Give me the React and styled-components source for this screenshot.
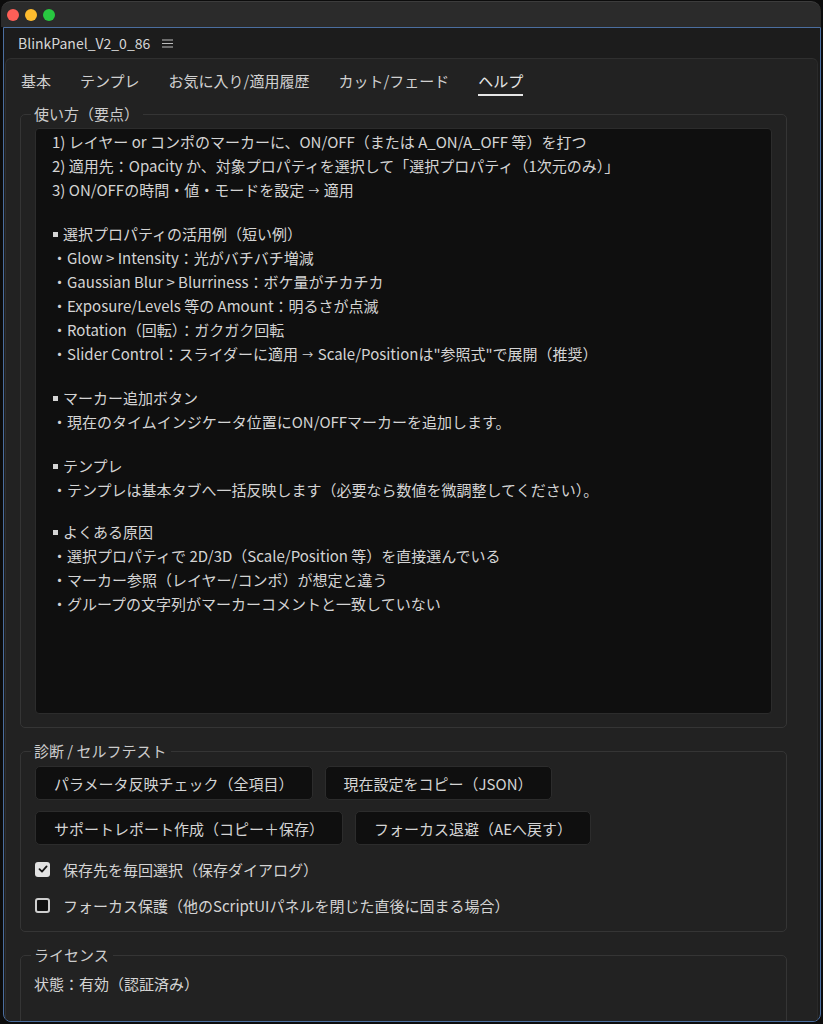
import React from "react";
import styled, { createGlobalStyle } from "styled-components";

const FONT = `"Noto Sans CJK JP", "Noto Sans", sans-serif`;

const GlobalStyle = createGlobalStyle`
  html, body {
    margin: 0;
    padding: 0;
    background: #0c0c0c;
  }
  * {
    box-sizing: border-box;
  }
`;

const helpLines = [
  { text: "1) レイヤー or コンポのマーカーに、ON/OFF（または A_ON/A_OFF 等）を打つ" },
  { text: "2) 適用先：Opacity か、対象プロパティを選択して「選択プロパティ（1次元のみ）」" },
  { text: "3) ON/OFFの時間・値・モードを設定 → 適用" },
  { blank: 20 },
  { head: "選択プロパティの活用例（短い例）" },
  { text: "・Glow > Intensity：光がバチバチ増減" },
  { text: "・Gaussian Blur > Blurriness：ボケ量がチカチカ" },
  { text: "・Exposure/Levels 等の Amount：明るさが点滅" },
  { text: "・Rotation（回転）：ガクガク回転" },
  { text: "・Slider Control：スライダーに適用 → Scale/Positionは\"参照式\"で展開（推奨）" },
  { blank: 20 },
  { head: "マーカー追加ボタン" },
  { text: "・現在のタイムインジケータ位置にON/OFFマーカーを追加します。" },
  { blank: 20 },
  { head: "テンプレ" },
  { text: "・テンプレは基本タブへ一括反映します（必要なら数値を微調整してください）。" },
  { blank: 18 },
  { head: "よくある原因" },
  { text: "・選択プロパティで 2D/3D（Scale/Position 等）を直接選んでいる" },
  { text: "・マーカー参照（レイヤー/コンポ）が想定と違う" },
  { text: "・グループの文字列がマーカーコメントと一致していない" },
];

const tabs = ["基本", "テンプレ", "お気に入り/適用履歴", "カット/フェード", "ヘルプ"];

// the arrow is drawn smaller than the text around it
function withArrows(text) {
  const parts = text.split("→");
  return parts.map((p, i) => (
    <React.Fragment key={i}>
      {p}
      {i < parts.length - 1 && <Arrow>→</Arrow>}
    </React.Fragment>
  ));
}

function CheckIcon() {
  return (
    <svg width="10" height="10" viewBox="0 0 10 10">
      <path d="M1.5 5.2 L4 7.6 L8.6 2.4" fill="none" stroke="#161616" strokeWidth="1.8" strokeLinecap="round" strokeLinejoin="round" />
    </svg>
  );
}

function MenuIcon() {
  return (
    <svg width="11" height="9" viewBox="0 0 11 9">
      <path d="M0 1h11M0 4.5h11M0 8h11" stroke="#bdbdbd" strokeWidth="1.1" />
    </svg>
  );
}

export default function App() {
  return (
    <>
      <GlobalStyle />
      <Window>
        <TitleBar>
          <Light color="#fe5f57" />
          <Light color="#febc2e" />
          <Light color="#28c840" />
        </TitleBar>
        <Frame>
          <Header>
            <span>BlinkPanel_V2_0_86</span>
            <MenuIcon />
          </Header>
          <Content>
            <Tabs>
              {tabs.map((t) => (
                <Tab key={t} active={t === "ヘルプ"}>
                  {t}
                </Tab>
              ))}
            </Tabs>

            <Group bottom={13}>
              <Legend>使い方（要点）</Legend>
              <HelpBox>
                {helpLines.map((l, i) =>
                  l.blank ? (
                    <Spacer key={i} size={l.blank} />
                  ) : l.head ? (
                    <Line key={i}>
                      <Square />
                      {l.head}
                    </Line>
                  ) : (
                    <Line key={i}>{withArrows(l.text)}</Line>
                  )
                )}
              </HelpBox>
            </Group>

            <Group gap bottom={8}>
              <Legend>診断 / セルフテスト</Legend>
              <ButtonRow>
                <Button>パラメータ反映チェック（全項目）</Button>
                <Button>現在設定をコピー（JSON）</Button>
              </ButtonRow>
              <ButtonRow second>
                <Button>サポートレポート作成（コピー＋保存）</Button>
                <Button>フォーカス退避（AEへ戻す）</Button>
              </ButtonRow>
              <CheckRow first>
                <Box checked>
                  <CheckIcon />
                </Box>
                保存先を毎回選択（保存ダイアログ）
              </CheckRow>
              <CheckRow>
                <Box />
                フォーカス保護（他のScriptUIパネルを閉じた直後に固まる場合）
              </CheckRow>
            </Group>

            <Group gap bottom={60}>
              <Legend>ライセンス</Legend>
              <Status>状態：有効（認証済み）</Status>
            </Group>
          </Content>
        </Frame>
      </Window>
    </>
  );
}

const Window = styled.div`
  width: 823px;
  height: 1024px;
  padding: 1px 2px 0 1px;
  font-family: ${FONT};
  color: #d2d2d2;
`;

const TitleBar = styled.div`
  height: 26px;
  display: flex;
  align-items: center;
  gap: 6px;
  padding-left: 6px;
  background: #2b2b2b;
  border-top: 1px solid #3c3c3c;
  border-radius: 10px 10px 0 0;
`;

const Light = styled.span`
  width: 12px;
  height: 12px;
  border-radius: 50%;
  background: ${({ color }) => color};
`;

const Frame = styled.div`
  height: 995px;
  margin: 0 0 0 2px;
  display: flex;
  flex-direction: column;
  background: #1c1c1c;
  border: 1px solid #4b6e9f;
  border-radius: 0 0 8px 8px;
  overflow: hidden;
`;

const Header = styled.div`
  height: 30px;
  flex-shrink: 0;
  display: flex;
  align-items: center;
  gap: 12px;
  padding-left: 14px;
  font-size: 14px;
  color: #d6d6d6;
`;

const Content = styled.div`
  flex: 1;
  margin: 0 2px 0 1px;
  padding: 0 30px 0 14px;
  background: #222222;
  border-top: 1px solid #2f2f2f;
  border-left: 1px solid #2f2f2f;
  border-right: 1px solid #2a2a2a;
  border-radius: 6px 6px 0 0;
  overflow: hidden;
`;

const Tabs = styled.div`
  display: flex;
  gap: 29px;
  padding: 12px 0 0 1px;
`;

const Tab = styled.div`
  font-size: 15px;
  line-height: 20px;
  padding-bottom: 3px;
  border-bottom: 2px solid ${({ active }) => (active ? "#e6e6e6" : "transparent")};
  color: ${({ active }) => (active ? "#e6e6e6" : "#d0d0d0")};
`;

const Group = styled.fieldset`
  margin: ${({ gap }) => (gap ? "13px" : "8px")} 0 0 0;
  padding: 4px 14px ${({ bottom }) => bottom}px 14px;
  border: 1px solid #353535;
  border-radius: 5px;
  min-width: 0;
`;

const Legend = styled.legend`
  margin-left: -4px;
  padding: 0 4px 0 3px;
  font-size: 15px;
  line-height: 20px;
  color: #cccccc;
`;

const HelpBox = styled.div`
  height: 586px;
  padding: 1px 16px;
  background: #0f0f0f;
  border: 1px solid #2c2c2c;
  border-radius: 4px;
`;

const Line = styled.div`
  display: flex;
  align-items: center;
  font-size: 15px;
  line-height: 24px;
  white-space: pre;
  color: #d4d4d4;
`;

const Arrow = styled.span`
  font-size: 11px;
  margin: 0 1px;
`;

const Square = styled.span`
  width: 5px;
  height: 5px;
  margin: 1px 5px 0 1px;
  background: #d4d4d4;
`;

const Spacer = styled.div`
  height: ${({ size }) => size}px;
`;

const ButtonRow = styled.div`
  display: flex;
  gap: 12px;
  margin-top: ${({ second }) => (second ? "11px" : "1px")};
`;

const Button = styled.div`
  height: 34px;
  display: flex;
  align-items: center;
  padding: 0 18px;
  font-size: 15px;
  color: #d4d4d4;
  background: #0f0f0f;
  border: 1px solid #2c2c2c;
  border-radius: 5px;
`;

const CheckRow = styled.div`
  height: 36px;
  display: flex;
  align-items: center;
  gap: 13px;
  margin-top: ${({ first }) => (first ? "6px" : "0")};
  font-size: 15px;
  color: #d4d4d4;
`;

const Box = styled.span`
  width: 15px;
  height: 15px;
  display: flex;
  align-items: center;
  justify-content: center;
  border-radius: 3px;
  background: ${({ checked }) => (checked ? "#e2e2e2" : "#111111")};
  border: ${({ checked }) => (checked ? "none" : "2px solid #cfcfcf")};
`;

const Status = styled.div`
  margin-left: -1px;
  padding-top: 5px;
  font-size: 15px;
  line-height: 20px;
  color: #d4d4d4;
`;
